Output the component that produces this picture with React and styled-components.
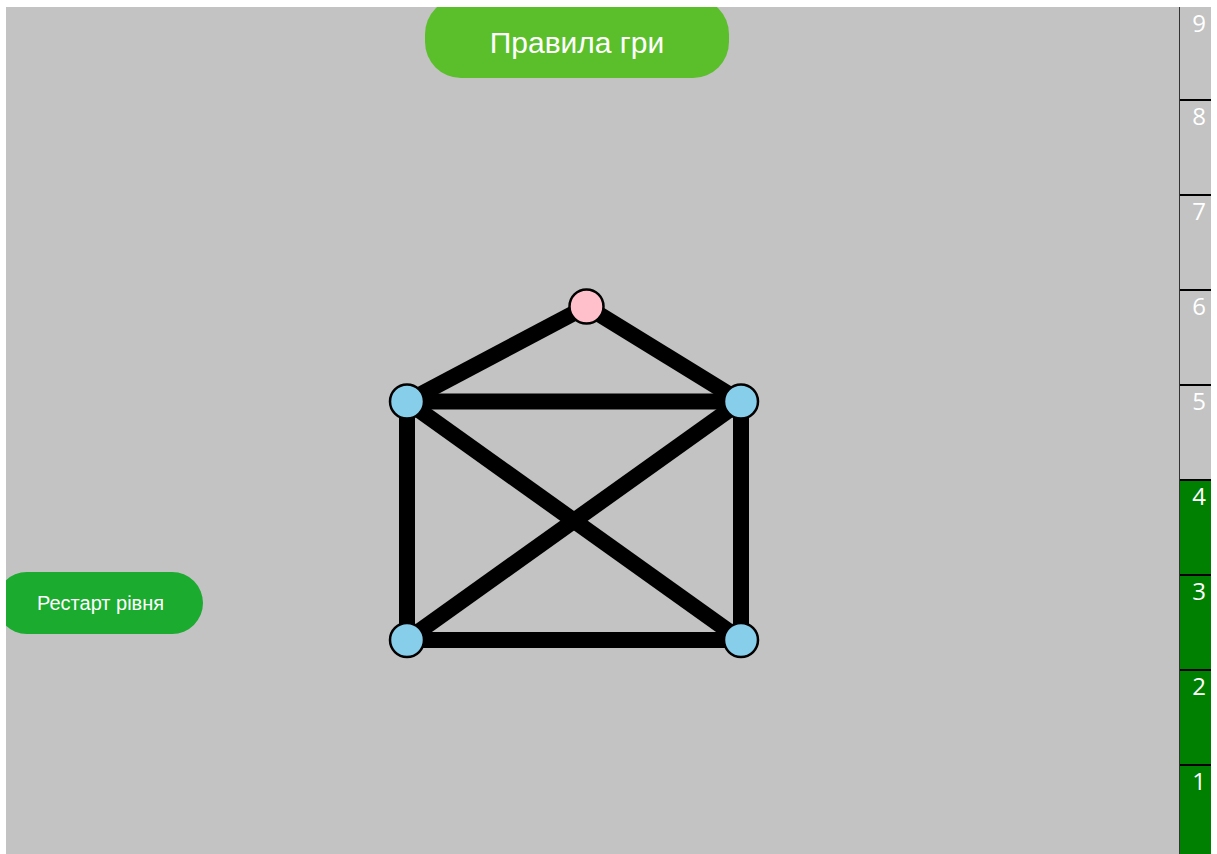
import styled, { createGlobalStyle } from "styled-components";

const GlobalStyle = createGlobalStyle`
  html, body {
    margin: 0;
    padding: 0;
    background: #fff;
    overflow: hidden;
  }
  #root {
    padding: 7px 6px 0 6px;
    height: 100vh;
    box-sizing: border-box;
  }
`;

const Page = styled.div`
  display: grid;
  grid-template-columns: 1fr 32px;
  height: 100%;
  background: #c3c3c3;
  overflow: hidden;
`;

const Main = styled.div`
  display: flex;
  flex-direction: column;
  min-width: 0;
`;

const RulesButton = styled.button`
  align-self: flex-start;
  margin: -9px 0 0 419px;
  width: 304px;
  height: 80px;
  padding: 9px 0 0;
  border: none;
  border-radius: 36px;
  background: #5bbf2b;
  color: #fff;
  font-family: "Liberation Sans", Arial, sans-serif;
  font-size: 30px;
  cursor: pointer;
`;

const Board = styled.div`
  display: grid;
  grid-template-columns: 197px 1fr;
  align-items: start;
  flex: 1;
`;

const RestartButton = styled.button`
  margin: 494px 0 0 -10px;
  height: 62px;
  padding: 0 0 0 41px;
  border: none;
  border-radius: 31px;
  background: #1aab2f;
  color: #fff;
  text-align: left;
  font-family: "Liberation Sans", Arial, sans-serif;
  font-size: 20px;
  cursor: pointer;
`;

const Canvas = styled.svg`
  display: block;
  width: 976px;
  height: 776px;
`;

const Levels = styled.div`
  display: flex;
  flex-direction: column;
  border-left: 1px solid #333;
`;

const Level = styled.div`
  box-sizing: border-box;
  height: 95px;
  flex-shrink: 0;
  border-top: 2px solid #000;
  padding: 1px 5px 0 0;
  text-align: right;
  background: ${(p) => (p.$done ? "#008000" : "#c3c3c3")};
  color: #fff;
  font-family: "Open Sans", "DejaVu Sans", sans-serif;
  font-size: 24px;
  line-height: 28px;

  &:first-child {
    height: 92px;
    border-top: none;
    padding-top: 2px;
  }
`;

const nodes = [
  { id: "a", x: 383.5, y: 228.5, fill: "#ffc0cb" },
  { id: "b", x: 204, y: 323.5, fill: "#87ceeb" },
  { id: "c", x: 538, y: 323.5, fill: "#87ceeb" },
  { id: "d", x: 204, y: 562, fill: "#87ceeb" },
  { id: "e", x: 538, y: 562, fill: "#87ceeb" },
];

const edges = [
  ["a", "b"],
  ["a", "c"],
  ["b", "c"],
  ["b", "d"],
  ["c", "e"],
  ["d", "e"],
  ["b", "e"],
  ["c", "d"],
];

const byId = Object.fromEntries(nodes.map((n) => [n.id, n]));

const levels = [9, 8, 7, 6, 5, 4, 3, 2, 1];
const passed = 4;

export default function App() {
  return (
    <>
      <GlobalStyle />
      <Page>
        <Main>
          <RulesButton>Правила гри</RulesButton>
          <Board>
            <RestartButton>Рестарт рівня</RestartButton>
            <Canvas viewBox="0 0 976 776">
              {edges.map(([from, to]) => (
                <line
                  key={from + to}
                  x1={byId[from].x}
                  y1={byId[from].y}
                  x2={byId[to].x}
                  y2={byId[to].y}
                  stroke="#000"
                  strokeWidth="16"
                />
              ))}
              {nodes.map((n) => (
                <circle
                  key={n.id}
                  cx={n.x}
                  cy={n.y}
                  r="17"
                  fill={n.fill}
                  stroke="#000"
                  strokeWidth="2.5"
                />
              ))}
            </Canvas>
          </Board>
        </Main>
        <Levels>
          {levels.map((n) => (
            <Level key={n} $done={n <= passed}>
              {n}
            </Level>
          ))}
        </Levels>
      </Page>
    </>
  );
}
